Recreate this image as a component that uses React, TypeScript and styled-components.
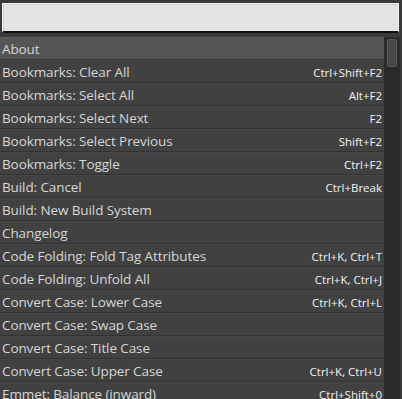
import React from "react";
import styled, { createGlobalStyle } from "styled-components";

const Global = createGlobalStyle`
  html, body { margin: 0; padding: 0; background: #3a3a3a; overflow: hidden; }
  body { width: 402px; height: 399px; }
`;

const Panel = styled.div`
  width: 402px;
  height: 399px;
  overflow: hidden;
  display: flex;
  flex-direction: column;
  background: #3a3a3a;
  padding-top: 3px;
  box-sizing: border-box;
`;

const Search = styled.div`
  flex: 0 0 auto;
  margin: 0 3px 0 2px;
  height: 30px;
  box-sizing: border-box;
  background: #e4e4e4;
  border: 1px solid #f4f4f4;
  border-bottom: 2px solid #111;
  box-shadow: inset 1px 1px 0 #cfcfcf;
`;

const Body = styled.div`
  margin-top: 4px;
  display: flex;
  flex: 1;
  min-height: 0;
`;

const List = styled.div`
  flex: 1;
  display: flex;
  flex-direction: column;
  overflow: hidden;
`;

const Row = styled.div<{ $active?: boolean }>`
  flex: 0 0 23px;
  height: 23px;
  box-sizing: border-box;
  display: flex;
  align-items: center;
  justify-content: space-between;
  padding: 1px 2px 0 2px;
  background: ${(p) => (p.$active ? "#555555" : "#414141")};
  border-top: 1px solid ${(p) => (p.$active ? "#5c5c5c" : "#474747")};
  border-bottom: 1px solid #323232;
`;

const Label = styled.span`
  font-family: "Open Sans", "Liberation Sans", sans-serif;
  font-size: 13.5px;
  color: #d6d6d6;
  white-space: nowrap;
  letter-spacing: -0.1px;
`;

const Keys = styled.span`
  font-family: "Open Sans", "Liberation Sans", sans-serif;
  font-size: 11.5px;
  color: #f2f2f2;
  white-space: nowrap;
`;

const Track = styled.div`
  width: 16px;
  margin-right: 2px;
  background: #2b2b2b;
  padding: 2px 3px 0 3px;
  box-sizing: border-box;
`;

const Thumb = styled.div`
  height: 28px;
  background: #474747;
  border: 1px solid #5a5a5a;
  border-radius: 2px;
  box-sizing: border-box;
`;

const items: [string, string][] = [
  ["About", ""],
  ["Bookmarks: Clear All", "Ctrl+Shift+F2"],
  ["Bookmarks: Select All", "Alt+F2"],
  ["Bookmarks: Select Next", "F2"],
  ["Bookmarks: Select Previous", "Shift+F2"],
  ["Bookmarks: Toggle", "Ctrl+F2"],
  ["Build: Cancel", "Ctrl+Break"],
  ["Build: New Build System", ""],
  ["Changelog", ""],
  ["Code Folding: Fold Tag Attributes", "Ctrl+K, Ctrl+T"],
  ["Code Folding: Unfold All", "Ctrl+K, Ctrl+J"],
  ["Convert Case: Lower Case", "Ctrl+K, Ctrl+L"],
  ["Convert Case: Swap Case", ""],
  ["Convert Case: Title Case", ""],
  ["Convert Case: Upper Case", "Ctrl+K, Ctrl+U"],
  ["Emmet: Balance (inward)", "Ctrl+Shift+0"],
];

export default function App() {
  return (
    <Panel>
      <Global />
      <Search />
      <Body>
        <List>
          {items.map(([label, keys], i) => (
            <Row key={label} $active={i === 0}>
              <Label>{label}</Label>
              {keys && <Keys>{keys}</Keys>}
            </Row>
          ))}
        </List>
        <Track>
          <Thumb />
        </Track>
      </Body>
    </Panel>
  );
}
